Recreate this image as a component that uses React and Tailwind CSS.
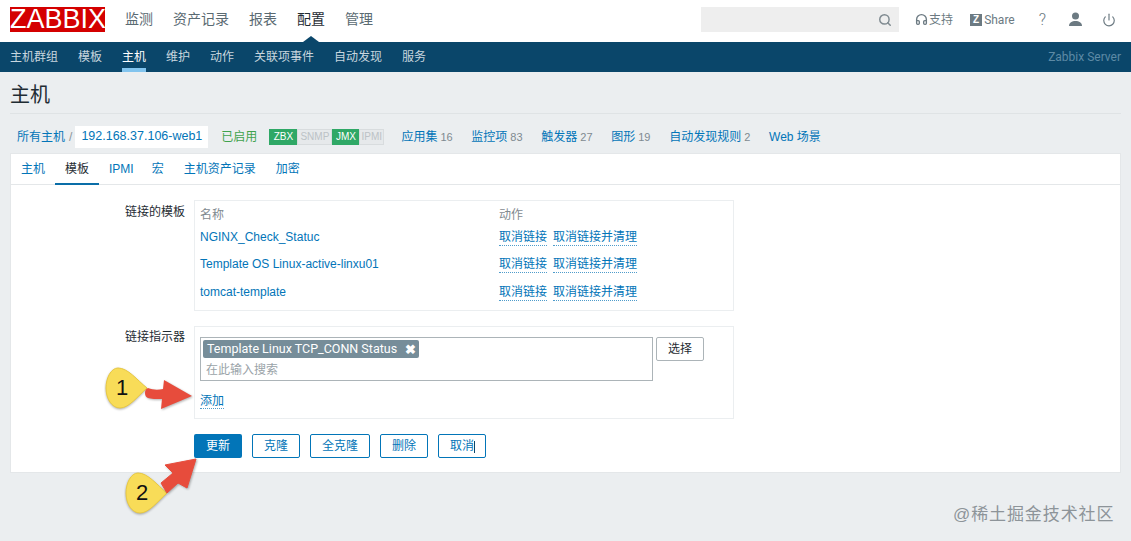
import React from "react";
import { Search, Headphones, Power } from "lucide-react";

const mainMenu = ["监测", "资产记录", "报表", "配置", "管理"];
const subMenu = ["主机群组", "模板", "主机", "维护", "动作", "关联项事件", "自动发现", "服务"];
const stats = [
  ["应用集", "16"],
  ["监控项", "83"],
  ["触发器", "27"],
  ["图形", "19"],
  ["自动发现规则", "2"],
  ["Web 场景", ""],
];
const tabs = ["主机", "模板", "IPMI", "宏", "主机资产记录", "加密"];
const templates = ["NGINX_Check_Statuc", "Template OS Linux-active-linxu01", "tomcat-template"];

function Badge({ on, children, className }) {
  return (
    <span
      className={`h-[16px] flex items-center justify-center text-[10px] leading-none border ${
        on ? "bg-[#2fa866] border-[#2fa866] text-white" : "bg-[#e6e9eb] border-[#d8dcde] text-[#bcc2c6]"
      } ${className}`}
    >
      {children}
    </span>
  );
}

function DotLink({ children }) {
  return <span className="text-[#0275b8] border-b border-dotted border-[#4f9ccb] leading-[15px]">{children}</span>;
}

function Callout({ n, className }) {
  return (
    <div className={`absolute w-[60px] h-[50px] ${className}`}>
      <svg width="60" height="50" viewBox="0 0 60 50" className="absolute inset-0">
        <path
          d="M43 22 C33 14 24 2 14 2 C7 2 2 12 2 22 C2 33 8 42 16 42 C25 42 34 30 43 22 Z"
          fill="#f8dc58"
          stroke="#e8c840"
          strokeWidth="1"
          style={{ filter: "drop-shadow(0 1px 1px rgba(0,0,0,.3))" }}
        />
      </svg>
      <span className="absolute left-[12px] top-[9px] text-[22px] leading-[26px] text-[#111] font-['Liberation_Sans',sans-serif]">
        {n}
      </span>
    </div>
  );
}

export default function App() {
  return (
    <div className="relative w-[1131px] h-[541px] overflow-hidden bg-[#ebeef0] text-[12px] text-[#1f2c33] font-['Liberation_Sans','Noto_Sans_CJK_SC',sans-serif]">
      {/* top bar */}
      <div className="h-[42px] bg-white flex items-center pl-[10px] pr-[15px] pb-[3px]">
        <div className="w-[95px] h-[25px] bg-[#d40000] text-white text-[27px] leading-[25px] text-center mr-[20px] font-['Liberation_Sans',sans-serif]">
          ZABBIX
        </div>
        <div className="flex gap-5 text-[14px] text-[#5a6a72]">
          {mainMenu.map((m) => (
            <span key={m} className={m === "配置" ? "text-[#1f2c33]" : ""}>
              {m}
            </span>
          ))}
        </div>
        <div className="ml-auto flex items-center text-[#6c7a82]">
          <div className="w-[198px] h-[25px] bg-[#eeeeee] flex items-center justify-end pr-[7px] mr-[16px]">
            <Search size={14} strokeWidth={2.5} className="text-[#7f8a90]" />
          </div>
          <Headphones size={13} strokeWidth={2.5} className="mr-[1px]" />
          <span className="mr-[17px]">支持</span>
          <span className="w-[12px] h-[12px] bg-[#6c7a82] text-white text-[10px] font-bold leading-[12px] text-center mr-[2px]">Z</span>
          <span className="mr-[24px] font-['Roboto',sans-serif]">Share</span>
          <span className="text-[16px] mr-[22px] font-['Roboto',sans-serif] font-light">?</span>
          <svg width="15" height="15" viewBox="0 0 15 15" fill="currentColor" className="mr-[19px]">
            <circle cx="7.5" cy="4" r="3.5" />
            <path d="M1 14 C1 10.5 4 9 7.5 9 S14 10.5 14 14 Z" />
          </svg>
          <Power size={14} strokeWidth={2} />
        </div>
      </div>

      {/* sub menu */}
      <div className="relative h-[30px] bg-[#0a466a] flex items-stretch pl-[10px] pr-[10px]">
        <div className="absolute left-[303px] top-[-6px] w-0 h-0 border-x-[8px] border-x-transparent border-b-[6px] border-b-[#0a466a]" />
        <div className="flex gap-5 text-[#c8d6df]">
          {subMenu.map((m) => (
            <span
              key={m}
              className={`flex items-center border-b-4 pt-[4px] ${
                m === "主机" ? "border-[#82c4ee] text-white" : "border-transparent"
              }`}
            >
              {m}
            </span>
          ))}
        </div>
        <span className="ml-auto self-center text-[#5d8aa5] font-['Roboto',sans-serif]">Zabbix Server</span>
      </div>

      <div className="px-[10px]">
        <h1 className="h-[42px] pt-[9px] text-[20px] leading-[28px] text-[#1f2c33] border-b border-[#dfe3e5]">主机</h1>

        {/* breadcrumb row */}
        <div className="h-[39px] flex items-center pl-[7px] pt-[6px]">
          <span className="text-[#0275b8]">所有主机</span>
          <span className="ml-[4px] mr-[3px] text-[#8a959b]">/</span>
          <span className="w-[133px] h-[22px] bg-white flex items-center justify-center text-[12.5px] text-[#0275b8]">192.168.37.106-web1</span>
          <span className="ml-[13px] text-[#3fa34d]">已启用</span>
          <div className="ml-[12px] flex">
            <Badge on className="w-[28px]">ZBX</Badge>
            <Badge className="w-[35px]">SNMP</Badge>
            <Badge on className="w-[27px]">JMX</Badge>
            <Badge className="w-[25px]">IPMI</Badge>
          </div>
          <div className="ml-[17px] flex gap-[18.7px]">
            {stats.map(([name, count]) => (
              <span key={name} className="text-[#0275b8]">
                {name}
                {count && <span className="ml-[3px] text-[11px] text-[#7f8a90]">{count}</span>}
              </span>
            ))}
          </div>
        </div>

        {/* card */}
        <div className="h-[320px] bg-white border border-[#e4e7e9]">
          <div className="h-[31px] flex border-b border-[#e4e7e9]">
            {tabs.map((t) => (
              <span
                key={t}
                className={`flex items-center h-[31px] border-b-2 ${t === "IPMI" ? "pl-[10px] pr-[8px]" : "px-[10px]"} ${
                  t === "模板" ? "border-[#0a6ea8] text-[#1f2c33]" : "border-transparent text-[#0275b8]"
                }`}
              >
                {t}
              </span>
            ))}
          </div>

          <div className="pt-[15px]">
            <div className="flex">
              <span className="w-[174px] text-right pt-[5px] leading-[15px]">链接的模板</span>
              <div className="ml-[9px] w-[540px] h-[111px] border border-[#ebeef0] px-[5px] pt-[7px]">
                <div className="flex text-[#7f8a90] h-[15px] leading-[15px]">
                  <span className="w-[299px]">名称</span>
                  <span>动作</span>
                </div>
                <div className="mt-[7px] flex flex-col gap-[11.4px]">
                  {templates.map((t) => (
                    <div key={t} className="flex h-[16px] leading-[15px]">
                      <span className="w-[299px] text-[#0275b8]">{t}</span>
                      <div className="flex gap-[6px]">
                        <DotLink>取消链接</DotLink>
                        <DotLink>取消链接并清理</DotLink>
                      </div>
                    </div>
                  ))}
                </div>
              </div>
            </div>

            <div className="flex mt-[15px]">
              <span className="w-[174px] text-right pt-[4px] leading-[15px]">链接指示器</span>
              <div className="ml-[9px] w-[540px] h-[93px] border border-[#ebeef0] px-[5px] pt-[10px]">
                <div className="flex items-start">
                  <div className="w-[453px] h-[44px] border border-[#acb4b8] pl-[2px] pt-[2px]">
                    <div className="inline-flex items-center h-[18px] bg-[#768d99] text-white rounded-[2px] pl-[4px] pr-[3px] gap-[8px] text-[12.5px] font-['Roboto',sans-serif]">
                      <span>Template Linux TCP_CONN Status</span>
                      <span className="text-[13px] font-bold leading-none">✖</span>
                    </div>
                    <div className="text-[#9aa3a8] pl-[3px] pt-[5px] leading-[15px]">在此输入搜索</div>
                  </div>
                  <span className="ml-[3px] w-[48px] h-[24px] border border-[#acb4b8] rounded-[2px] flex items-center justify-center">选择</span>
                </div>
                <div className="mt-[11px]">
                  <DotLink>添加</DotLink>
                </div>
              </div>
            </div>

            <div className="flex gap-[10px] ml-[183px] mt-[15px]">
              <span className="w-[48px] h-[24px] bg-[#0275b8] text-white rounded-[2px] flex items-center justify-center">更新</span>
              {[["克隆", "w-[48px]"], ["全克隆", "w-[60px]"], ["删除", "w-[48px]"], ["取消", "w-[48px]"]].map(([t, w]) => (
                <span key={t} className={`relative ${w} h-[24px] border border-[#0275b8] text-[#0275b8] rounded-[2px] flex items-center justify-center`}>
                  {t}
                  {t === "取消" && <span className="absolute left-[35px] top-[6px] w-[1px] h-[12px] bg-[#0a466a]" />}
                </span>
              ))}
            </div>
          </div>
        </div>
      </div>

      {/* annotations over the page */}
      <Callout n="1" className="left-[104px] top-[366px]" />
      <svg className="absolute left-[140px] top-[376px]" width="56" height="40" viewBox="0 0 56 40">
        <path
          d="M8 12 C13 14 18 14 23 13 L24 4 L52 20 L21 33 L22 23 C16 23 11 23 8 22 C4 21 4 13 8 12 Z"
          fill="#e74c3c"
          style={{ filter: "drop-shadow(1px 1px 1px rgba(0,0,0,.3))" }}
        />
      </svg>
      <Callout n="2" className="left-[124px] top-[471px]" />
      <svg className="absolute left-[155px] top-[454px]" width="50" height="50" viewBox="0 0 50 50">
        <path
          d="M41 5 L10 11 L18 19 L6 29 L12 39 L23 29 L32 34 Z"
          fill="#e74c3c"
          stroke="#e74c3c"
          strokeLinejoin="round"
          strokeWidth="1"
          style={{ filter: "drop-shadow(1px 1px 1px rgba(0,0,0,.3))" }}
        />
      </svg>
      <span className="absolute left-[953px] top-[504px] text-[17px] leading-[22px] text-[#8d9499] tracking-[0.9px]">@稀土掘金技术社区</span>
    </div>
  );
}
